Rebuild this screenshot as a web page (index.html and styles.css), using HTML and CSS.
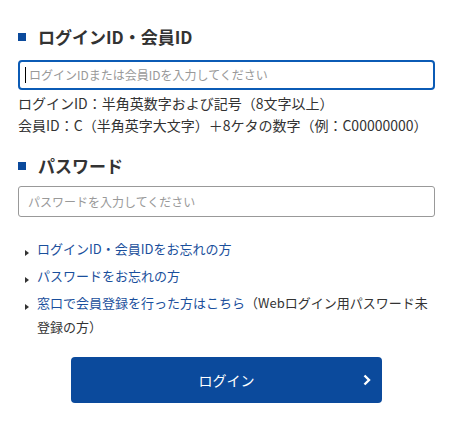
FILE: index.html
```html
<!DOCTYPE html>
<html lang="ja">
<head>
<meta charset="utf-8">
<link rel="stylesheet" href="styles.css">
</head>
<body>
<div class="page">
  <section class="field">
    <h2 class="heading">ログインID・会員ID</h2>
    <div class="input focused"><span class="caret"></span><span class="ph">ログインIDまたは会員IDを入力してください</span></div>
    <p class="note">ログインID：半角英数字および記号（8文字以上）<br>会員ID：C（半角英字大文字）＋8ケタの数字（例：C00000000）</p>
  </section>
  <section class="field pw">
    <h2 class="heading">パスワード</h2>
    <div class="input"><span class="ph">パスワードを入力してください</span></div>
  </section>
  <ul class="links">
    <li><a href="#">ログインID・会員IDをお忘れの方</a></li>
    <li><a href="#">パスワードをお忘れの方</a></li>
    <li><a href="#">窓口で会員登録を行った方はこちら</a>（Webログイン用パスワード未登録の方）</li>
  </ul>
  <div class="btn-wrap">
    <button class="btn">ログイン<svg class="chev" width="10" height="14" viewBox="0 0 10 14"><path d="M2.5 2.5 L7 7 L2.5 11.5" fill="none" stroke="#fff" stroke-width="2.4"/></svg></button>
  </div>
</div>
</body>
</html>
```

FILE: styles.css
```css
* { box-sizing: border-box; }
html, body { margin: 0; padding: 0; background: #fff; }
body {
  font-family: "Noto Sans CJK JP", "Noto Sans", sans-serif;
  color: #333;
}
.page { padding: 24px 21px 0 18px; }
.heading {
  margin: 0;
  font-size: 17px;
  font-weight: 700;
  line-height: 26px;
  color: #333;
  display: flex;
  align-items: center;
  gap: 12px;
}
.heading::before {
  content: "";
  width: 8px;
  height: 8px;
  background: #0b4a9c;
  flex: none;
}
.input {
  margin-top: 10px;
  height: 30px;
  border: 1px solid #999;
  border-radius: 3px;
  display: flex;
  align-items: center;
  padding-left: 9px;
  font-size: 12px;
  color: #999;
}
.input.focused {
  border: 2px solid #0b5bb5;
  border-radius: 4px;
  padding-left: 5px;
}
.caret {
  width: 1px;
  height: 16px;
  background: #000;
  margin-right: 3px;
}
.ph { line-height: 16px; }
.note {
  margin: 2px 0 0;
  font-size: 14px;
  line-height: 22px;
  color: #333;
}
.pw { margin-top: 17px; }
.pw .input { margin-top: 7px; height: 31px; }
.links {
  list-style: none;
  margin: 20px 0 0;
  padding: 0 0 0 19px;
  font-size: 13px;
  line-height: 24px;
}
.links li {
  position: relative;
  margin-bottom: 3px;
}
.links li::before {
  content: "";
  position: absolute;
  left: -12px;
  top: 13px;
  border-left: 4px solid #333;
  border-top: 3px solid transparent;
  border-bottom: 3px solid transparent;
}
.links a { color: #1a4f9c; text-decoration: none; }
.btn-wrap {
  display: flex;
  justify-content: center;
  margin-top: 18px;
}
.btn {
  width: 311px;
  height: 46px;
  background: #0b4a9c;
  border: none;
  border-radius: 4px;
  color: #fff;
  font-family: "Noto Sans CJK JP", "Noto Sans", sans-serif;
  font-size: 14px;
  position: relative;
  display: flex;
  align-items: center;
  justify-content: center;
}
.chev { position: absolute; right: 10px; top: 16px; }
```
